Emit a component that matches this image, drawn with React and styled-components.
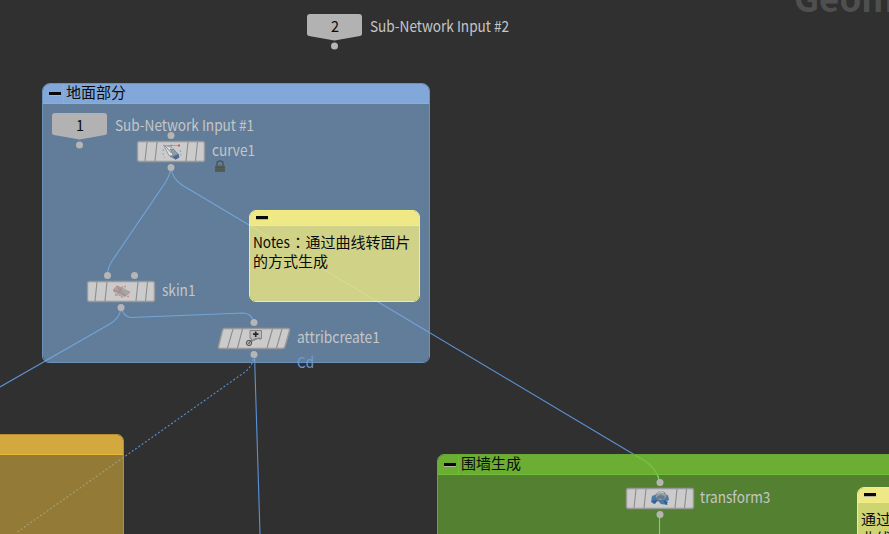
import React from "react";
import styled, { createGlobalStyle } from "styled-components";

const GlobalStyle = createGlobalStyle`
  body { margin: 0; background: #303030; }
  * { box-sizing: border-box; }
`;

const Canvas = styled.main`
  position: relative;
  width: 889px;
  height: 534px;
  overflow: hidden;
  background: #303030;
  color: #c8c8c8;
  font: 15px/20px "Noto Sans CJK SC", "Noto Sans", sans-serif;
`;

const Watermark = styled.div`
  position: absolute;
  left: 794px;
  top: -25px;
  font-size: 35px;
  line-height: 44px;
  font-weight: 700;
  color: #4f4f4f;
  white-space: nowrap;
`;

const Wires = styled.svg`
  position: absolute;
  inset: 0;
  fill: none;
  stroke: #5b91d4;
  stroke-width: 1.1;
`;

const Frame = styled.section`
  position: absolute;
  left: ${(p) => p.$x}px;
  top: ${(p) => p.$y}px;
  width: ${(p) => p.$w}px;
  height: ${(p) => p.$h}px;
  display: flex;
  flex-direction: column;
  border: 1px solid ${(p) => p.$line};
  border-radius: ${(p) => p.$radius || "7px"};
  background: ${(p) => p.$body};
  background-clip: padding-box;
  overflow: hidden;
  color: #0b0b0b;
`;

const FrameHeader = styled.header`
  display: flex;
  flex: none;
  height: ${(p) => p.$h}px;
  background: ${(p) => p.$fill};
  border-bottom: 1px solid ${(p) => p.$line};
`;

const Toggle = styled.div`
  flex: none;
  width: ${(p) => p.$w}px;
  border-right: 1px solid ${(p) => p.$line};
  padding: ${(p) => p.$top}px 0 0 6px;

  &::before {
    content: "";
    display: block;
    width: 12px;
    height: 3px;
    background: #080808;
    border-bottom: 1px solid #b5b59b;
  }
`;

const FrameTitle = styled.h2`
  margin: 0 0 0 2px;
  font-size: 15px;
  line-height: 16px;
  font-weight: 400;
`;

const NoteText = styled.p`
  margin: 6px 0 0 3px;
  width: ${(p) => p.$w}px;
  line-height: 19px;
`;

const Latin = styled.span`
  display: inline-block;
  width: 37.5px;
  transform: scaleX(0.91);
  transform-origin: 0 50%;
`;

const CenteredColon = styled.span`
  font-family: "Noto Sans CJK TC", sans-serif;
`;

const NodeArt = styled.svg`
  position: absolute;
  left: ${(p) => p.$x}px;
  top: ${(p) => p.$y}px;
  overflow: visible;
`;

const Label = styled.span`
  position: absolute;
  left: ${(p) => p.$x}px;
  top: ${(p) => p.$y}px;
  white-space: nowrap;
  color: ${(p) => p.$color || "#c4c6c8"};
  transform: scaleX(${(p) => p.$stretch || 0.907});
  transform-origin: 0 50%;
`;

const palettes = {
  blue: { body: "rgba(131,177,223,.6)", header: "#82a8d9", line: "#80b0ec" },
  green: { body: "rgba(109,182,52,.6)", header: "rgba(116,190,54,.75)", line: "#72bd37" },
  orange: { body: "rgba(214,172,59,.6)", header: "#d2a83f", line: "#eab838" },
  note: { body: "rgba(236,232,130,.8)", header: "#eee887", line: "#f3ee83" },
};

function NetworkBox({ x, y, w, h, tone, title, radius, line }) {
  const c = palettes[tone];
  return (
    <Frame $x={x} $y={y} $w={w} $h={h} $body={c.body} $line={line || c.line} $radius={radius}>
      <FrameHeader $h={20} $fill={c.header} $line={c.line}>
        <Toggle $w={21} $line={c.line} $top={8} />
        {title && <FrameTitle>{title}</FrameTitle>}
      </FrameHeader>
    </Frame>
  );
}

function StickyNote({ x, y, w, h, textWidth, children }) {
  const c = palettes.note;
  return (
    <Frame $x={x} $y={y} $w={w} $h={h} $body={c.body} $line={c.line}>
      <FrameHeader $h={15} $fill={c.header} $line={c.line}>
        <Toggle $w={21} $line={c.line} $top={5} />
      </FrameHeader>
      <NoteText $w={textWidth}>{children}</NoteText>
    </Frame>
  );
}

function InputNode({ x, y, number }) {
  return (
    <>
      <NodeArt $x={x} $y={y} width="56" height="36">
        <path d="M3 0H52Q55 0 55 3V20Q55 21.6 53 22L27.5 26.5L2 22Q0 21.6 0 20V3Q0 0 3 0Z" fill="#b2b2b2" />
        <circle cx="27.5" cy="32" r="3.5" fill="#b5b5b5" />
        <text transform="translate(28 18) scale(.96 1)" textAnchor="middle" fontSize="15" fill="#0b0b0b">{number}</text>
      </NodeArt>
      <Label $x={x + 62.5} $y={y + 2}>{`Sub-Network Input #${number}`}</Label>
    </>
  );
}

const glyphs = {
  curve: (
    <>
      <path d="M26.5 8Q25 14 28 17M43 9Q45 13 43 16" fill="none" stroke="#78a9c7" strokeWidth="1" strokeDasharray="2 2" />
      <path d="M26.5 4L35 6.5L41 13L38 17.5L32 14.5Z" fill="#dde0e1" stroke="#858a90" strokeWidth=".8" />
      <path d="M27 4L34.5 12" stroke="#777c80" strokeWidth=".9" />
      <path d="M33 8L36.5 8.5L41.5 13.5L38.5 18L33 15.5L36 13.5Z" fill="#8e9baa" stroke="#6c757e" strokeWidth=".6" />
      <path d="M35.5 15.5L41.5 13L42.5 16.5L38.5 18.8Z" fill="#4f6b92" />
      <path d="M27 4.5H42" stroke="#d88b8d" strokeWidth="1" />
      <path d="M33.5 3.7h1.5v1.5h-1.5zM41 3.5h2v2h-2z" fill="#d15b5e" />
    </>
  ),
  skin: (
    <>
      <path d="M27 7L31 5L42 11L38 16L33 14L27 11Z" fill="#a49c9b" opacity=".85" />
      <path d="M26 10H31L38 15L43 12M29 5L36 7L42 11M28 13L34 15M31 7L38 14M36 5L31 13" fill="none" stroke="#928382" strokeWidth=".8" opacity=".7" />
      <path d="M26 9h2M29 5.5h2M37 5.5h2M41 11h2M28 14h2M34 16h2M40 15.5h2M31 8.5h4" stroke="#d77878" strokeWidth="1.4" opacity=".75" />
    </>
  ),
  attribute: (
    <>
      <path d="M32 2.5H43.5V10.5H37L33.5 13V10.5H32Z" fill="#b9bbbd" stroke="#858585" />
      <path d="M37.7 3.5V9M35 6.2H40.5" stroke="#292929" strokeWidth="1.7" />
      <path d="M32.5 13.5L41 10L42.5 12" fill="none" stroke="#858585" strokeWidth="1.2" />
      <circle cx="31" cy="15" r="2.7" fill="#aaa" stroke="#555" />
      <path d="M30.5 16L33 12.5" stroke="#555" />
    </>
  ),
  transform: (
    <>
      <path d="M26 8L31 6L35 9L42 7L43 12L39 14L42 17L35 16L32 13L28 16L25 14Z" fill="#4b79a6" />
      <path d="M29 8L32 4L38 4L41 8L38 12L32 12Z" fill="#929da7" stroke="#6b7884" strokeWidth=".7" />
      <path d="M31 9Q35 5 39 9L37 12L34 10L31 12Z" fill="#637b91" />
      <path d="M31 5.5L34 4L38 5" fill="none" stroke="#c4cbd0" />
      <path d="M26 13L31 12L29 16ZM37 12L42 14L40 17Z" fill="#285e91" />
    </>
  ),
};

function OperatorNode({ x, y, name, icon, skewed, inputs = [34], labelX = 75, stretch }) {
  return (
    <>
      <NodeArt $x={x} $y={y} width="74" height="36">
        {skewed ? (
          <path d="M6.5.5H70Q72 .5 71.5 2.5L67 18.5Q66.5 20.5 64.5 20.5H2Q0 20.5 .5 18.5L4.5 2.5Q5 .5 6.5.5Z" fill="#cbcbcb" stroke="#999" strokeWidth="1.4" />
        ) : (
          <rect x=".5" y=".5" width="67" height="20" rx="2" fill="#cbcbcb" stroke="#999" strokeWidth="1.4" />
        )}
        <path
          d={skewed ? "M15 1L9.5 20M24.5 1L19.5 20M54.5 1L49 20M64 1L58.5 20" : "M10 1L8 20M20 1L18 20M51 1L49 20M60.5 1L58.5 20"}
          stroke="#8d8d8d"
          strokeWidth="1.1"
        />
        {glyphs[icon]}
        {inputs.map((cx) => <circle key={cx} cx={cx} cy="-5.5" r="3.5" fill="#b5b5b5" />)}
        <circle cx={skewed ? 36 : 34} cy="26.5" r="3.5" fill="#b5b5b5" />
      </NodeArt>
      <Label $x={x + labelX} $y={y - 1} $stretch={stretch}>{name}</Label>
    </>
  );
}

export default function App() {
  return (
    <>
      <GlobalStyle />
      <Canvas>
        <Watermark>Geometry</Watermark>
        <Wires width="889" height="534">
          <path d="M171 168Q170 176 163 186L112 261Q107.5 268 107.5 275" />
          <path d="M171 168Q172 178 182 185L634 454.5" />
          <path d="M634 454.5L640 458Q657 467 659.5 482" stroke="#a0ffb8" strokeWidth="1.4" />
          <path d="M121 308Q120 319 108 325L0 387" />
          <path d="M121 308Q124 317 131 317.5L243 313Q252 313 254 323" />
          <path d="M254.5 355L260 534" />
          <path d="M254 355Q253 366 245 372L16 533" strokeDasharray="2 2" />
          <path d="M659.5 514V534" stroke="#a0f0c8" />
        </Wires>

        <NetworkBox x={42} y={83} w={388} h={280} tone="blue" title="地面部分" radius="8px 8px 7px 7px" line="#6d92ba" />
        <NetworkBox x={-300} y={434} w={424} h={150} tone="orange" line="#b88f30" />
        <NetworkBox x={437} y={454} w={600} h={150} tone="green" title="围墙生成" line="#68a836" />
        <StickyNote x={249} y={210} w={171} h={92} textWidth={161}>
          <Latin>Notes</Latin><CenteredColon>：</CenteredColon>通过曲线转面片的方式生成
        </StickyNote>
        <StickyNote x={857} y={487} w={100} h={90} textWidth={60}>通过曲线曲线</StickyNote>

        <InputNode x={307} y={14} number={2} />
        <InputNode x={52} y={113} number={1} />
        <OperatorNode x={137} y={141} name="curve1" icon="curve" />
        <OperatorNode x={87} y={281} name="skin1" icon="skin" inputs={[20.5, 47.5]} />
        <OperatorNode x={218} y={328} name="attribcreate1" icon="attribute" skewed inputs={[36]} labelX={79} stretch={0.92} />
        <OperatorNode x={625.5} y={488} name="transform3" icon="transform" labelX={74.5} />
        <Label $x={297} $y={352} $color="#689bdc">Cd</Label>
        <NodeArt $x={214} $y={160} width="12" height="13">
          <path d="M3 6V3.5Q3 1 6 1Q9 1 9 3.5V6" fill="none" stroke="#485a5b" strokeWidth="1.5" />
          <rect x="1" y="5.5" width="10" height="6.5" rx=".7" fill="#535f55" />
          <path d="M1 7.5H11M1 10H11" stroke="#46534d" strokeWidth=".7" />
        </NodeArt>
      </Canvas>
    </>
  );
}
